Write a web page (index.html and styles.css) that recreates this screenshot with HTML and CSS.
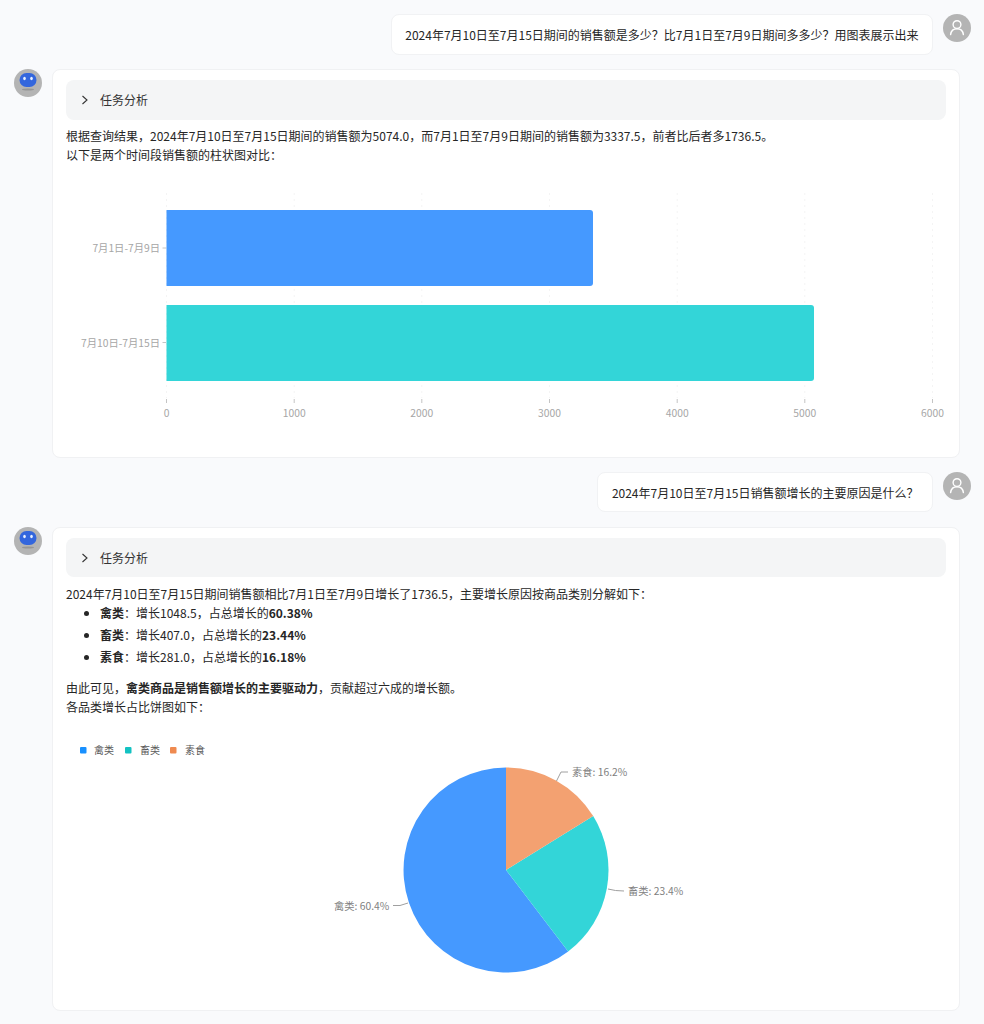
FILE: index.html
```html
<!DOCTYPE html>
<html lang="zh-CN">
<head>
<meta charset="utf-8">
<title>销售额分析</title>
<link rel="stylesheet" href="styles.css">
</head>
<body>
<main class="chat">
  <section class="row row-user">
    <div class="bubble">2024年7月10日至7月15日期间的销售额是多少&#xFF1F;比7月1日至7月9日期间多多少&#xFF1F;用图表展示出来</div>
    <svg class="avatar" viewBox="0 0 28 28"><circle cx="14" cy="14" r="14" fill="#b4b4b4"/><circle cx="14" cy="10.6" r="3.9" fill="none" stroke="#fff" stroke-width="1.4"/><path d="M7.6 20.6c.5-3.6 3-5.8 6.4-5.8s5.900 2.200 6.400 5.800" fill="none" stroke="#fff" stroke-width="1.400" stroke-linecap="round"/></svg>
  </section>

  <section class="row row-ai">
    <svg class="avatar" viewBox="0 0 28 28"><circle cx="14" cy="14" r="14" fill="#b4b4b4"/><ellipse cx="14" cy="20.500" rx="6" ry="1" fill="#969696"/><rect x="5.500" y="4" width="17" height="14" rx="7" fill="#3366dd"/><ellipse cx="10.500" cy="9.500" rx="1.300" ry="1.700" fill="#e8f0ff"/><ellipse cx="17.500" cy="9.500" rx="1.300" ry="1.700" fill="#e8f0ff"/></svg>
    <article class="card">
      <div class="collapse"><svg class="chev" viewBox="0 0 10 10"><path d="M2.500 1l4.500 4-4.500 4" fill="none" stroke="#333" stroke-width="1.100"/></svg><span>任务分析</span></div>
      <p class="para">根据查询结果&#xFF0C;2024年7月10日至7月15日期间的销售额为5074.0&#xFF0C;而7月1日至7月9日期间的销售额为3337.5&#xFF0C;前者比后者多1736.5。<br>以下是两个时间段销售额的柱状图对比&#xFF1A;</p>
      <svg class="chart chart-bar" viewBox="66 172 880 275">
        <g class="grid">
          <path d="M166.500 193V398M294.200 193V398M421.800 193V398M549.500 193V398M677.200 193V398M804.800 193V398M932.500 193V398"/>
        </g>
        <path class="tick" d="M166.500 399V403M294.200 399V403M421.800 399V403M549.500 399V403M677.200 399V403M804.800 399V403M932.500 399V403M162.500 248H166M162.500 342.500H166"/>
        <path class="bar-blue" d="M166.500 210H590a3 3 0 0 1 3 3V283a3 3 0 0 1-3 3H166.500Z"/>
        <path class="bar-teal" d="M166.500 305H811a3 3 0 0 1 3 3V378a3 3 0 0 1-3 3H166.500Z"/>
        <text class="axis" x="160" y="252" text-anchor="end">7月1日-7月9日</text>
        <text class="axis" x="160" y="346.500" text-anchor="end">7月10日-7月15日</text>
        <text class="axis" x="166.500" y="417" text-anchor="middle">0</text>
        <text class="axis" x="294.200" y="417" text-anchor="middle">1000</text>
        <text class="axis" x="421.800" y="417" text-anchor="middle">2000</text>
        <text class="axis" x="549.500" y="417" text-anchor="middle">3000</text>
        <text class="axis" x="677.200" y="417" text-anchor="middle">4000</text>
        <text class="axis" x="804.800" y="417" text-anchor="middle">5000</text>
        <text class="axis" x="932.500" y="417" text-anchor="middle">6000</text>
      </svg>
    </article>
  </section>

  <section class="row row-user">
    <div class="bubble">2024年7月10日至7月15日销售额增长的主要原因是什么&#xFF1F;</div>
    <svg class="avatar" viewBox="0 0 28 28"><circle cx="14" cy="14" r="14" fill="#b4b4b4"/><circle cx="14" cy="10.6" r="3.9" fill="none" stroke="#fff" stroke-width="1.4"/><path d="M7.6 20.6c.5-3.6 3-5.8 6.4-5.8s5.900 2.200 6.400 5.800" fill="none" stroke="#fff" stroke-width="1.400" stroke-linecap="round"/></svg>
  </section>

  <section class="row row-ai">
    <svg class="avatar" viewBox="0 0 28 28"><circle cx="14" cy="14" r="14" fill="#b4b4b4"/><ellipse cx="14" cy="20.500" rx="6" ry="1" fill="#969696"/><rect x="5.500" y="4" width="17" height="14" rx="7" fill="#3366dd"/><ellipse cx="10.500" cy="9.500" rx="1.300" ry="1.700" fill="#e8f0ff"/><ellipse cx="17.500" cy="9.500" rx="1.300" ry="1.700" fill="#e8f0ff"/></svg>
    <article class="card">
      <div class="collapse"><svg class="chev" viewBox="0 0 10 10"><path d="M2.500 1l4.500 4-4.500 4" fill="none" stroke="#333" stroke-width="1.100"/></svg><span>任务分析</span></div>
      <p class="para">2024年7月10日至7月15日期间销售额相比7月1日至7月9日增长了1736.5&#xFF0C;主要增长原因按商品类别分解如下&#xFF1A;</p>
      <ul class="list">
        <li><strong>禽类</strong>&#xFF1A;增长1048.5&#xFF0C;占总增长的<strong>60.38%</strong></li>
        <li><strong>畜类</strong>&#xFF1A;增长407.0&#xFF0C;占总增长的<strong>23.44%</strong></li>
        <li><strong>素食</strong>&#xFF1A;增长281.0&#xFF0C;占总增长的<strong>16.18%</strong></li>
      </ul>
      <p class="para">由此可见&#xFF0C;<strong>禽类商品是销售额增长的主要驱动力</strong>&#xFF0C;贡献超过六成的增长额。<br>各品类增长占比饼图如下&#xFF1A;</p>
      <svg class="chart chart-pie" viewBox="66 727 880 273">
        <rect class="leg-blue" x="80" y="747" width="6.500" height="6.500" rx="1"/>
        <text class="legend" x="94" y="754">禽类</text>
        <rect class="leg-teal" x="125" y="747" width="6.500" height="6.500" rx="1"/>
        <text class="legend" x="140" y="754">畜类</text>
        <rect class="leg-orange" x="170" y="747" width="6.500" height="6.500" rx="1"/>
        <text class="legend" x="185" y="754">素食</text>
        <path class="bar-blue" d="M506 870L568.200 951.500A102.500 102.500 0 1 1 506 767.500Z"/>
        <path class="bar-teal" d="M506 870L593.200 816.100A102.500 102.500 0 0 1 568.200 951.500Z"/>
        <path class="slice-orange" d="M506 870V767.500A102.500 102.500 0 0 1 593.200 816.100Z"/>
        <path class="leader" d="M556.500 781L561 772H568M608 889Q615 891 624 891M408 903L400 905.500H393"/>
        <text class="pie-label" x="572" y="776">素食: 16.2%</text>
        <text class="pie-label" x="628" y="895">畜类: 23.4%</text>
        <text class="pie-label" x="334" y="910">禽类: 60.4%</text>
      </svg>
    </article>
  </section>
</main>
</body>
</html>
```
FILE: styles.css
```css
* { box-sizing: border-box; }
html, body { margin: 0; padding: 0; }
body {
  background: #f9fafc;
  font-family: "Noto Sans CJK SC", "Noto Sans", sans-serif;
  font-size: 12px;
  line-height: 19px;
  color: #262626;
}
.chat {
  display: flex;
  flex-direction: column;
  gap: 14.25px;
  padding: 14px 13px 14px 14px;
}
.row { display: flex; gap: 10px; align-items: flex-start; }
.row-user { justify-content: flex-end; }
.avatar { width: 28px; height: 28px; flex: none; }
.bubble {
  height: 40.5px;
  padding: 0 13.5px;
  display: flex;
  align-items: center;
  background: #fff;
  border: 1px solid #f1f2f4;
  border-radius: 8px;
}
.row-ai { padding-right: 11px; }
.card {
  flex: 1;
  min-width: 0;
  padding: 10.5px 13px 10px;
  background: #fff;
  border: 1px solid #f0f1f3;
  border-radius: 8px;
}
.collapse {
  height: 39.25px;
  display: flex;
  align-items: center;
  gap: 10px;
  padding-left: 14px;
  background: #f4f5f6;
  border-radius: 8px;
  color: #333;
}
.chev { width: 10px; height: 10px; flex: none; }
.para { margin: 6.75px 0 0; }
.list { margin: -1.5px 0 0; padding: 0 0 0 34px; }
.list li { line-height: 22px; }
.list + .para { margin-top: 10px; }
strong { font-weight: 700; }
.chart { display: block; width: 880px; }
.chart-bar { height: 275px; margin-top: 7.25px; }
.chart-pie { height: 273px; margin-top: 11.5px; }
.grid path { fill: none; stroke: #f4f4f4; stroke-width: 1; stroke-dasharray: 2 4; }
.tick { fill: none; stroke: #c4c4c4; stroke-width: 1; }
.bar-blue { fill: #4599ff; }
.bar-teal { fill: #33d5d8; }
.slice-orange { fill: #f3a171; }
.leg-blue { fill: #1890ff; }
.leg-teal { fill: #13c2c2; }
.leg-orange { fill: #ef8a50; }
.axis { font-size: 10.3px; fill: #a6a6a6; }
.legend { font-size: 10px; fill: #595959; }
.pie-label { font-size: 10.3px; fill: #808080; }
.leader { fill: none; stroke: #a0a0a0; stroke-width: 1; }
```
